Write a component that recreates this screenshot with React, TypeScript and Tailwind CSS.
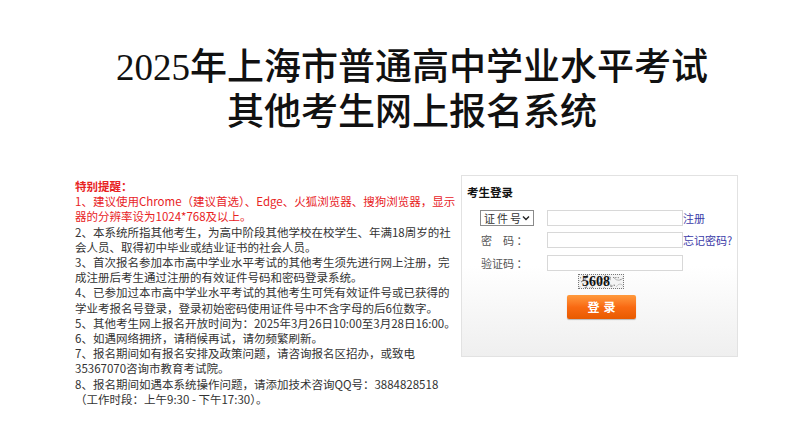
import React from "react";

const red = "text-[#e8231f]";

function Line({ children, className = "" }: { children: React.ReactNode; className?: string }) {
  return <div className={"whitespace-nowrap " + className}>{children}</div>;
}

function Captcha() {
  const dots: { x: number; y: number }[] = [];
  let s = 7;
  for (let i = 0; i < 70; i++) {
    s = (s * 9301 + 49297) % 233280;
    const x = (s / 233280) * 46;
    s = (s * 9301 + 49297) % 233280;
    const y = (s / 233280) * 15;
    dots.push({ x, y });
  }
  return (
    <div className="relative w-[46px] h-[15px] bg-[#f4f4f4] border border-dotted border-[#777] overflow-hidden flex items-center">
      <svg className="absolute inset-0" width="46" height="15" viewBox="0 0 46 15">
        {dots.map((d, i) => (
          <rect key={i} x={d.x} y={d.y} width="1" height="1" fill={i % 3 === 0 ? "#aaa" : "#666"} />
        ))}
        <path d="M35 3 Q40 8 45 2" stroke="#888" strokeWidth="0.6" fill="none" />
        <path d="M37 12 Q41 6 45 12" stroke="#aaa" strokeWidth="0.6" fill="none" />
      </svg>
      <span
        className="relative ml-[3px] text-[14px] leading-none text-[#111] font-bold"
        style={{ fontFamily: '"Liberation Serif", serif' }}
      >
        5608
      </span>
    </div>
  );
}

export default function App() {
  return (
    <div
      className="w-[800px] h-[442px] bg-white overflow-hidden"
      style={{ fontFamily: '"Noto Sans CJK SC", "Noto Sans", sans-serif' }}
    >
      <div
        className="pt-[45px] pl-[24px] text-center text-[37px] leading-[45px] font-medium text-[#111]"
        style={{ fontFamily: '"Liberation Serif", "Noto Sans CJK SC", serif' }}
      >
        <div className="whitespace-nowrap">2025年上海市普通高中学业水平考试</div>
        <div className="whitespace-nowrap">其他考生网上报名系统</div>
      </div>

      <div className="flex mt-[44px]">
        <div className="ml-[75px] w-[386px] text-[11.5px] leading-[15.2px] text-[#333]">
          <Line className={red + " font-bold"}>特别提醒：</Line>
          <Line className={red}>1、建议使用Chrome（建议首选）、Edge、火狐浏览器、搜狗浏览器，显示</Line>
          <Line className={red}>器的分辨率设为1024*768及以上。</Line>
          <Line>2、本系统所指其他考生，为高中阶段其他学校在校学生、年满18周岁的社</Line>
          <Line>会人员、取得初中毕业或结业证书的社会人员。</Line>
          <Line>3、首次报名参加本市高中学业水平考试的其他考生须先进行网上注册，完</Line>
          <Line>成注册后考生通过注册的有效证件号码和密码登录系统。</Line>
          <Line>4、已参加过本市高中学业水平考试的其他考生可凭有效证件号或已获得的</Line>
          <Line>学业考报名号登录，登录初始密码使用证件号中不含字母的后6位数字。</Line>
          <Line>5、其他考生网上报名开放时间为：2025年3月26日10:00至3月28日16:00。</Line>
          <Line>6、如遇网络拥挤，请稍候再试，请勿频繁刷新。</Line>
          <Line>7、报名期间如有报名安排及政策问题，请咨询报名区招办，或致电</Line>
          <Line>35367070咨询市教育考试院。</Line>
          <Line>8、报名期间如遇本系统操作问题，请添加技术咨询QQ号：3884828518</Line>
          <Line>（工作时段：上午9:30 - 下午17:30）。</Line>
        </div>

        <div className="mt-[-4px] w-[277px] h-[182px] border border-[#e2e2e2] bg-gradient-to-b from-white via-white to-[#efefef] pl-[5px] pt-[8px]">
          <div className="text-[11.5px] leading-[16px] font-bold text-[#111]">考生登录</div>
          <div className="mt-[10px] flex flex-col gap-[6px] text-[11px] text-[#555]">
            <div className="flex items-center h-[16px]">
              <div className="ml-[13px] w-[54px] h-[16px] border border-[#8a8a8a] bg-white flex items-center pl-[3px] text-[#333] tracking-[2px]">
                <span className="leading-none">证件号</span>
                <svg width="8" height="6" viewBox="0 0 8 6" className="ml-[-1px]">
                  <path d="M1 1.5 L4 4.5 L7 1.5" stroke="#222" strokeWidth="1.4" fill="none" />
                </svg>
              </div>
              <div className="ml-[13px] w-[136px] h-[16px] border border-[#d8d8d8] bg-white" />
              <span className="text-[#3a3aa8] leading-none">注册</span>
            </div>
            <div className="flex items-center h-[16px]">
              <span className="ml-[14px] w-[66px] leading-none whitespace-pre">密　码 ：</span>
              <div className="w-[136px] h-[16px] border border-[#d8d8d8] bg-white" />
              <span className="text-[#3a3aa8] leading-none">忘记密码?</span>
            </div>
            <div className="flex items-center h-[16px] mt-[1px]">
              <span className="ml-[14px] w-[66px] leading-none whitespace-pre">验证码 ：</span>
              <div className="w-[136px] h-[16px] border border-[#d8d8d8] bg-white" />
            </div>
          </div>
          <div className="mt-[3px] ml-[111px]">
            <Captcha />
          </div>
          <div className="mt-[6px] ml-[100px] w-[69px] h-[24px] rounded-[2px] bg-gradient-to-b from-[#ff9a3c] via-[#f96a12] to-[#e85a00] shadow-[0_1px_1px_rgba(0,0,0,0.25)] flex items-center justify-center text-white text-[12px] font-bold tracking-[4px] pl-[4px]">
            登录
          </div>
        </div>
      </div>
    </div>
  );
}
